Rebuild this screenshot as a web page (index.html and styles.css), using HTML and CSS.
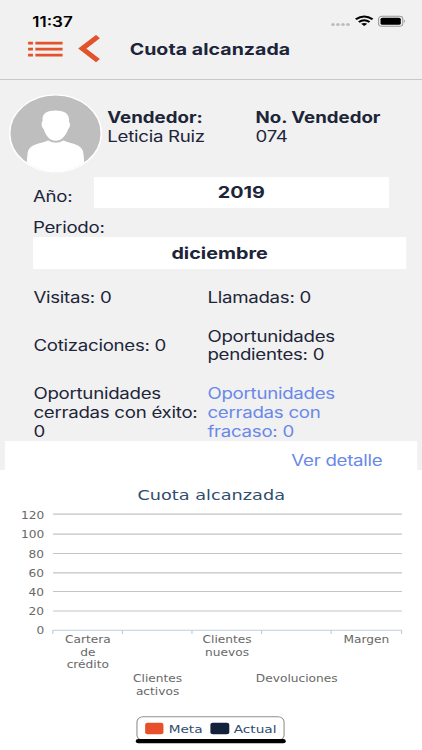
FILE: index.html
```html
<!DOCTYPE html>
<html lang="es">
<head>
    <meta charset="UTF-8">
    <meta name="viewport" content="width=device-width, initial-scale=1.0">
    <title>Cuota alcanzada</title>
    <link rel="stylesheet" href="styles.css">
</head>
<body>
    <div class="screen">
        <header>
            <div class="status">
                <span class="time">11:37</span>
                <svg class="status-icons" width="62" height="14" viewBox="0 0 62 14">
                    <g fill="#bdbdbd">
                        <circle cx="2" cy="10.5" r="1.5"/>
                        <circle cx="6.1" cy="10.5" r="1.5"/>
                        <circle cx="10.2" cy="10.5" r="1.5"/>
                        <circle cx="14.3" cy="10.5" r="1.5"/>
                    </g>
                    <g fill="none" stroke="#000" stroke-width="1.9">
                        <path d="M20.7 5.2Q27.6 -.4 34.5 5.2"/>
                        <path d="M23.2 8Q27.6 4.5 32 8"/>
                    </g>
                    <path d="M25.1 9.8Q27.6 8 30.1 9.8L27.6 12.1Z"/>
                    <rect x="39.4" y="2.2" width="19.8" height="10" rx="2.8" fill="none" stroke="#999" stroke-width=".9"/>
                    <rect x="41" y="3.7" width="16.6" height="7" rx="1.5"/>
                    <path d="M60.3 5.5Q61.8 7.1 60.3 8.9Z" fill="#999"/>
                </svg>
            </div>
            <div class="navbar">
                <svg class="menu" width="29" height="17" viewBox="0 0 29 17">
                    <path d="M0 2.2h4M6 2.2h22.3M0 8.2h4M6 8.2h22.3M0 14.2h4M6 14.2h22.3" stroke="#e2532b" stroke-width="2.7"/>
                </svg>
                <svg class="back" width="18" height="28" viewBox="0 0 18 28">
                    <path d="M16.3 1.6L3.5 13.6L16.3 25.6" fill="none" stroke="#e2532b" stroke-width="4.6"/>
                </svg>
                <h1>Cuota alcanzada</h1>
            </div>
        </header>

        <section class="vendedor">
            <svg class="avatar" width="77" height="79" viewBox="0 0 77 79">
                <defs>
                    <clipPath id="circulo"><ellipse cx="38.5" cy="39.3" rx="37" ry="38"/></clipPath>
                </defs>
                <ellipse cx="38.5" cy="39.3" rx="37.5" ry="38.5" fill="#bebebe"/>
                <g clip-path="url(#circulo)" fill="#fff">
                    <path d="M28 27C27 19 32 16.4 38.5 16.4C46 16.4 50.6 20 49.5 28C51 29 50.5 33 49 35C47 42 43 46.8 38.8 46.8C34 46.8 30.5 42 28.8 35C27 33 26.5 29 28 27Z"/>
                    <path d="M32.5 46.5Q38.8 51 45 46.5C52 50 59 50 61 57Q62 62 62.5 80H14.5Q15 62 16 57C18 50 25 50 32.5 46.5Z"/>
                </g>
                <ellipse cx="38.5" cy="39.3" rx="37.5" ry="38.5" fill="none" stroke="#fff" stroke-width="1.2"/>
            </svg>
            <div class="dato nombre"><b>Vendedor:</b><br>Leticia Ruiz</div>
            <div class="dato"><b>No. Vendedor</b><br>074</div>
        </section>

        <section class="filtros">
            <div class="anio">
                <label>Año:</label>
                <div class="campo">2019</div>
            </div>
            <label>Periodo:</label>
            <div class="campo periodo">diciembre</div>
        </section>

        <section class="resumen">
            <div>Visitas: 0</div>
            <div>Llamadas: 0</div>
            <div>Cotizaciones: 0</div>
            <div>Oportunidades<br>pendientes: 0</div>
            <div>Oportunidades<br>cerradas con éxito:<br>0</div>
            <div class="link">Oportunidades<br>cerradas con<br>fracaso: 0</div>
        </section>

        <div class="detalle"><span class="link">Ver detalle</span></div>

        <svg class="grafica" width="346" height="280" viewBox="0 0 346 280">
            <text class="titulo" x="173.2" y="30.5" textLength="121">Cuota alcanzada</text>
            <path class="lineas" d="M43.5 44.1H329.5M43.5 64.1H329.5M43.5 83.5H329.5M43.5 102.9H329.5M43.5 121.5H329.5M43.5 141H329.5"/>
            <path class="eje" d="M43 160.3H329.5M43.3 160V164M100.4 160V164M157.4 160V164M214.5 160V164M271.5 160V164M329.2 160V164"/>
            <g class="valores">
                <text x="36.2" y="49">120</text>
                <text x="36.2" y="68.3">100</text>
                <text x="36.2" y="87.6">80</text>
                <text x="36.2" y="106.9">60</text>
                <text x="36.2" y="126.2">40</text>
                <text x="36.2" y="145.5">20</text>
                <text x="36.2" y="164.5">0</text>
            </g>
            <g class="categorias">
                <text x="72" y="172.7">Cartera</text>
                <text x="72" y="185.7">de</text>
                <text x="72" y="198.5">crédito</text>
                <text x="129.2" y="211.6">Clientes</text>
                <text x="129.2" y="224.6">activos</text>
                <text x="186.2" y="172.7">Clientes</text>
                <text x="186.2" y="185.7">nuevos</text>
                <text x="243.3" y="211.6">Devoluciones</text>
                <text x="300.3" y="172.7">Margen</text>
            </g>
            <rect x="112.3" y="246.8" width="120.6" height="23.5" rx="5" fill="#fff" stroke="#909090" stroke-width=".9"/>
            <rect x="119" y="252.7" width="15" height="11.6" rx="2" fill="#e8502a"/>
            <rect x="172.5" y="252.7" width="15.5" height="11.6" rx="2" fill="#14233b"/>
            <text class="leyenda" x="138.3" y="263">Meta</text>
            <text class="leyenda" x="191.6" y="263">Actual</text>
            <rect x="111.3" y="269" width="123" height="4.2" rx="2"/>
        </svg>
    </div>
</body>
</html>
```

FILE: styles.css
```css
body {
    margin: 0;
    background-color: #fff;
    overflow: hidden;
}
.screen {
    width: 346px;
    height: 750px;
    transform: scaleX(1.2197);
    transform-origin: 0 0;
    background: linear-gradient(#f1f1f1 470px, #fff 470px);
    font-family: Inter, sans-serif;
    font-size: 15.3px;
    line-height: 18.7px;
    letter-spacing: -0.22px;
    color: #1d2539;
}
svg {
    display: block;
    flex: none;
}
header {
    box-sizing: border-box;
    height: 80px;
    padding-top: 14px;
    border-bottom: 1px solid #c8c8c8;
}
.status {
    display: flex;
    justify-content: space-between;
    height: 14px;
    padding: 0 13px 0 26.4px;
}
.time {
    font-size: 14px;
    line-height: 15px;
    font-weight: 600;
    letter-spacing: 0;
    color: #000;
}
.navbar {
    display: flex;
    align-items: center;
    height: 28px;
    margin-top: 7px;
    padding-left: 23px;
}
.back {
    margin-left: 12px;
}
h1 {
    margin: 0 0 0 24.3px;
    font-size: 16px;
    font-weight: 700;
    line-height: 18px;
    letter-spacing: 0.05px;
    position: relative;
    top: -0.5px;
    white-space: nowrap;
}
b {
    letter-spacing: 0;
}
.vendedor {
    display: flex;
    height: 97px;
    padding-left: 7.4px;
}
.avatar {
    margin-top: 13.5px;
}
.dato {
    margin-top: 29px;
    white-space: nowrap;
}
.nombre {
    width: 121.5px;
    margin-left: 3.6px;
}
.filtros {
    padding-left: 27px;
}
.anio {
    display: flex;
    height: 31px;
}
.anio label {
    width: 49.6px;
    padding-top: 11px;
}
.filtros > label {
    display: block;
    height: 18px;
    padding-top: 11px;
}
.campo {
    width: 242.4px;
    background-color: #fff;
    font-size: 16.2px;
    font-weight: 700;
    line-height: 31px;
    letter-spacing: 0;
    text-align: center;
}
.periodo {
    width: 306px;
    line-height: 32px;
}
.resumen {
    display: grid;
    grid-template-columns: 142.7px auto;
    align-items: center;
    row-gap: 20px;
    height: 151.5px;
    padding: 20px 0 0 27.4px;
    box-sizing: content-box;
    white-space: nowrap;
}
.link {
    color: #6988e8;
}
.detalle {
    height: 29.5px;
    margin: 0 4.2px;
    padding-right: 28.3px;
    background-color: #fff;
    line-height: 39px;
    text-align: right;
}
.grafica {
    font-family: "DejaVu Sans", sans-serif;
    letter-spacing: 0;
}
.titulo {
    font-size: 14.5px;
    text-anchor: middle;
    fill: #2f4d6d;
}
.lineas {
    stroke: #c4c4c4;
    stroke-width: 1.2;
}
.eje {
    fill: none;
    stroke: #c0d0e0;
    stroke-width: 1;
}
.valores, .categorias {
    font-size: 10px;
    fill: #686868;
}
.valores {
    text-anchor: end;
}
.categorias {
    text-anchor: middle;
}
.leyenda {
    font-size: 11.2px;
    fill: #2f4d6d;
}
```
